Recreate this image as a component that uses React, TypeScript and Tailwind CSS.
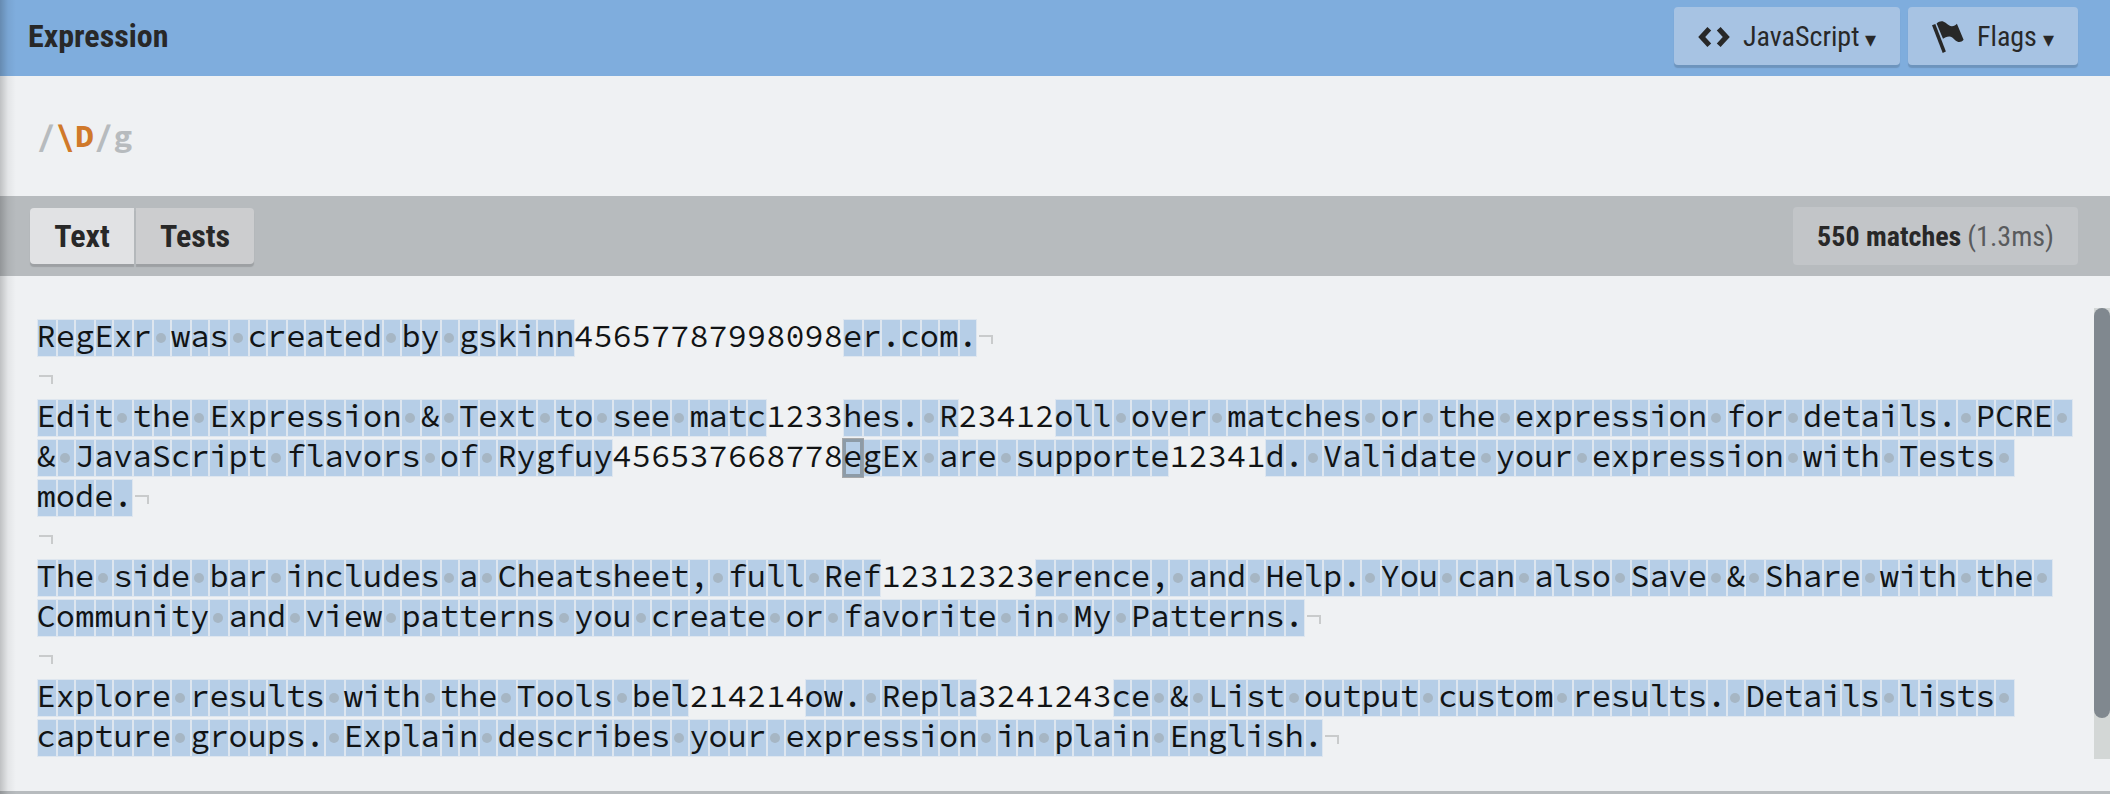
const LINES: string[] = [
  "RegExr was created by gskinn45657787998098er.com.¬",
  "¬",
  "Edit the Expression & Text to see matc1233hes. R23412oll over matches or the expression for details. PCRE ",
  "& JavaScript flavors of Rygfuy456537668778egEx are supporte12341d. Validate your expression with Tests ",
  "mode.¬",
  "¬",
  "The side bar includes a Cheatsheet, full Ref12312323erence, and Help. You can also Save & Share with the ",
  "Community and view patterns you create or favorite in My Patterns.¬",
  "¬",
  "Explore results with the Tools bel214214ow. Repla3241243ce & List output custom results. Details lists ",
  "capture groups. Explain describes your expression in plain English.¬",
];

const HOVER = { line: 3, col: 42 };

// Cell edges snap to an even pixel, so widths alternate between 18 and 20.
const edge = (i: number) => 2 * Math.round(9.6 * i);

function Cell({ char, index, hovered }: { char: string; index: number; hovered: boolean }) {
  const matched = char !== "¬" && !(char >= "0" && char <= "9");
  return (
    <span className="flex h-[38px] shrink-0" style={{ width: edge(index + 1) - edge(index) }}>
      {matched && (
        <span
          className={
            hovered
              ? "relative flex grow items-center justify-center border border-[#dee6ef] bg-[#b6cee7] after:absolute after:-inset-px after:z-10 after:border-[3px] after:border-[#8d9ba7] after:shadow-[0_0_0_1px_rgba(0,0,0,0.3)]"
              : "flex grow items-center justify-center border border-[#dee6ef] bg-[#b6cee7]"
          }
        >
          {char === " " && <span className="mr-0.5 size-[10px] shrink-0 rounded-full bg-[#a6b6c4]" />}
        </span>
      )}
      {char === "¬" && (
        <span className="mt-4 ml-[2px] h-[9px] w-[14px] shrink-0 border-t-2 border-r-2 border-[#c9cbcc]" />
      )}
    </span>
  );
}

function Line({ text, row }: { text: string; row: number }) {
  return (
    <div className="grid h-10">
      <div className="col-start-1 row-start-1 flex pt-px">
        {Array.from(text).map((c, i) => (
          <Cell key={i} char={c} index={i} hovered={row === HOVER.line && i === HOVER.col} />
        ))}
      </div>
      <div className="z-20 col-start-1 row-start-1 -ml-[0.4px] h-10 text-[32px] leading-9 whitespace-pre text-[#111314]">
        {text.replace("¬", "")}
      </div>
    </div>
  );
}

function CodeIcon() {
  return (
    <svg viewBox="0 0 32 22" className="mt-px h-[22px] w-8" fill="#282828">
      <path d="M.2 11 9.400.900l3.800 3.600L7.200 11l6 6.500-3.800 3.600Z" />
      <path d="M31.800 11 22.600.900l-3.800 3.600 6 6.500-6 6.500 3.800 3.600Z" />
    </svg>
  );
}

function FlagIcon() {
  return (
    <svg viewBox="0 0 32 32" className="mt-px h-8 w-8" fill="#282828">
      <path d="M0 4.200 3.300 3 13.900 30.600 10.700 32Z" />
      <path d="M4.600 2.400C7.600-.4 11-.4 13.600 1.800 16.400 4.200 18 5.400 20 5.300 22 5.300 23.600 4.400 24.900 2.800L31.600 18.800C29.300 21.600 26 21.800 23.200 19.200 21 17 19.600 15.400 17.200 15.400 14.600 15.400 12.600 16.400 11 17.800Z" />
    </svg>
  );
}

const BUTTON =
  "flex h-[58px] items-center rounded-[4px] bg-[#a7c3e3] pl-6 text-[28px] shadow-[0_3px_1px_rgba(0,0,0,0.14)]";

export default function App() {
  return (
    <div className="relative flex h-[794px] w-full flex-col overflow-hidden bg-[#eff1f3] font-['Roboto_Condensed','Roboto',sans-serif] text-[#282828]">
      <header className="flex h-[76px] shrink-0 items-center justify-between bg-[#7faddd] pr-8 pb-1 pl-7">
        <h1 className="text-[32px] leading-10 font-bold">Expression</h1>
        <div className="flex gap-2">
          <button className={`${BUTTON} w-[226px]`}>
            <CodeIcon />
            <span className="ml-[13px] pt-0.5">JavaScript</span>
            <span className="mt-1.5 ml-[6px] text-[22px]">▾</span>
          </button>
          <button className={`${BUTTON} w-[170px]`}>
            <FlagIcon />
            <span className="ml-[13px] pt-0.5">Flags</span>
            <span className="mt-1.5 ml-[6px] text-[22px]">▾</span>
          </button>
        </div>
      </header>

      <section className="flex h-[120px] shrink-0 items-center pl-[36.400px] font-['Source_Code_Pro',monospace] text-[32px] font-bold whitespace-pre text-[#b7bbbe]">
        <span>/</span>
        <span className="text-[#d0792a]">\D</span>
        <span>/g</span>
      </section>

      <div className="flex h-20 shrink-0 items-center justify-between bg-[#b7bbbe] pr-8 pl-[30px]">
        <div className="flex gap-0.5 text-[32px] font-bold">
          <button className="h-14 w-[104px] rounded-l-[4px] bg-[#e1e2e4] shadow-[0_3px_1px_rgba(0,0,0,0.14)]">Text</button>
          <button className="h-14 w-[118px] rounded-r-[4px] bg-[#cccdcf] shadow-[0_3px_1px_rgba(0,0,0,0.14)]">Tests</button>
        </div>
        <div className="flex h-[58px] w-[285px] items-center justify-center gap-[6px] rounded-[4px] bg-[#c2c5c8] pt-0.5 text-[28px]">
          <strong className="font-bold">550 matches</strong>
          <span className="text-[#595b5d]">(1.3ms)</span>
        </div>
      </div>

      <main className="flex grow justify-between border-b-[3px] border-[#b7bbbe] font-['Source_Code_Pro',monospace]">
        <div className="pt-[42px] pl-[37px]">
          {LINES.map((l, i) => (
            <Line key={i} text={l} row={i} />
          ))}
        </div>
        <div className="mt-8 h-[451px] w-4 bg-[#d3d7d6]">
          <div className="h-[410px] rounded-full bg-[#80888f]" />
        </div>
      </main>

      <div className="pointer-events-none absolute inset-y-0 left-0 w-4 bg-linear-to-r from-black/20 via-black/5 to-transparent" />
    </div>
  );
}
